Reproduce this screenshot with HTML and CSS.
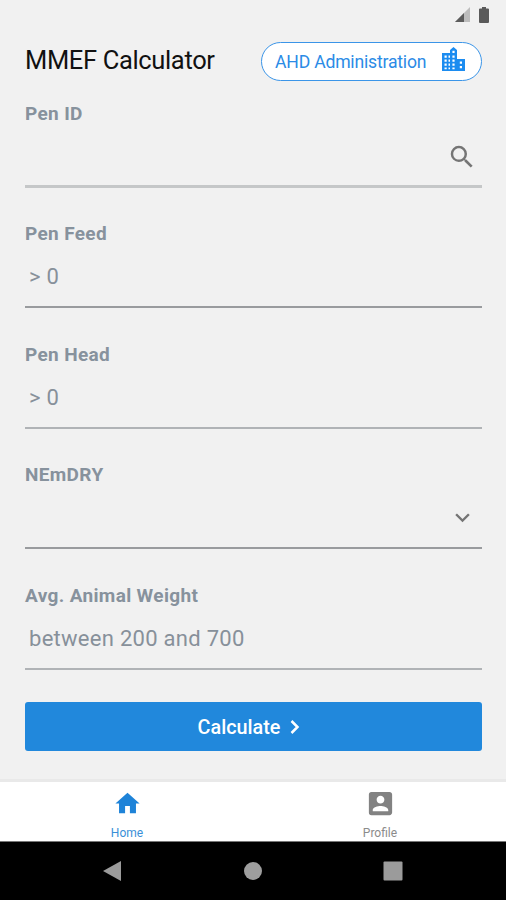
FILE: index.html
```html
<!DOCTYPE html>
<html lang="en">
<head>
    <meta charset="UTF-8">
    <meta name="viewport" content="width=device-width, initial-scale=1.0">
    <title>MMEF Calculator</title>
    <link rel="stylesheet" href="styles.css">
</head>
<body>
    <div class="status-bar">
        <svg class="signal" width="16" height="16" viewBox="0 0 16 16">
            <path d="M15 0v15H0z" fill="#bdbdbd"/>
            <path d="M9 6v9H0z" fill="#5c5c5c"/>
        </svg>
        <svg class="battery" width="10" height="16" viewBox="0 0 10 16">
            <path d="M3 0h4v1.5h2q1 0 1 1V15q0 1-1 1H1q-1 0-1-1V2.5q0-1 1-1h2z" fill="#5a5a5a"/>
        </svg>
    </div>

    <div class="header">
        <h1>MMEF Calculator</h1>
        <a class="admin-button" href="#">
            <span>AHD Administration</span>
            <svg width="23" height="24" viewBox="0 0 23 24">
                <path fill="#1c8cf0" fill-rule="evenodd" d="M0 6h8V3l3.500-3L15 3v9h8v12H0z
                    M2.500 8.500v2.200h2.200V8.500z M2.500 12.500v2.200h2.200v-2.200z M2.500 16.500v2.200h2.200v-2.200z M2.500 20.500v1.800h2.200v-1.800z
                    M6.500 8.500v2.200h1.500V8.500z M6.500 12.500v2.200h1.500v-2.200z M6.500 16.500v2.200h1.500v-2.200z M6.500 20.500v1.800h1.500v-1.800z
                    M10.400 3.800v2.200h2.200V3.800z M10.400 8.500v2.200h2.200V8.500z M10.400 12.500v2.200h2.200v-2.200z M10.400 16.500v2.200h2.200v-2.200z M10.400 20.500v1.800h2.200v-1.800z
                    M17.800 14.500v2.200H20v-2.200z M17.800 19v2.200H20V19z"/>
            </svg>
        </a>
    </div>

    <div class="form">
        <div class="field">
            <label for="pen-id">Pen ID</label>
            <div class="control light">
                <input id="pen-id" type="text">
                <svg width="30" height="30" viewBox="0 0 24 24">
                    <path fill="#757575" d="M15.500 14h-.79l-.28-.27A6.471 6.471 0 0 0 16 9.500 6.500 6.500 0 1 0 9.500 16c1.610 0 3.090-.59 4.230-1.570l.27.28v.79l5 4.990L20.490 19l-4.990-5zm-6 0C7.010 14 5 11.990 5 9.500S7.010 5 9.500 5 14 7.010 14 9.500 11.990 14 9.500 14z"/>
                </svg>
            </div>
        </div>
        <div class="field">
            <label for="pen-feed">Pen Feed</label>
            <div class="control">
                <input id="pen-feed" type="text" placeholder="&gt; 0">
            </div>
        </div>
        <div class="field">
            <label for="pen-head">Pen Head</label>
            <div class="control medium">
                <input id="pen-head" type="text" placeholder="&gt; 0">
            </div>
        </div>
        <div class="field">
            <label for="nem-dry">NEmDRY</label>
            <div class="control">
                <input id="nem-dry" type="text">
                <svg width="29" height="29" viewBox="0 0 24 24">
                    <path fill="#757575" d="M7.410 8.590 12 13.170l4.590-4.580L18 10l-6 6-6-6z"/>
                </svg>
            </div>
        </div>
        <div class="field">
            <label for="weight">Avg. Animal Weight</label>
            <div class="control medium">
                <input id="weight" type="text" placeholder="between 200 and 700">
            </div>
        </div>
        <button class="calculate" type="button">
            <span>Calculate</span>
            <svg width="10" height="16" viewBox="0 0 10 16">
                <path d="M1.500 2l6 6-6 6" fill="none" stroke="#fff" stroke-width="2.500"/>
            </svg>
        </button>
    </div>

    <div class="tabs">
        <a class="tab active" href="#">
            <svg width="29" height="29" viewBox="0 0 24 24">
                <path fill="#1e83d8" d="M10 20v-6h4v6h5v-8h3L12 3 2 12h3v8z"/>
            </svg>
            <span>Home</span>
        </a>
        <a class="tab" href="#">
            <svg width="31" height="31" viewBox="0 0 24 24">
                <path fill="#828282" d="M3 5v14a2 2 0 0 0 2 2h14c1.100 0 2-.9 2-2V5c0-1.100-.9-2-2-2H5a2 2 0 0 0-2 2zm12 4c0 1.660-1.340 3-3 3s-3-1.340-3-3 1.340-3 3-3 3 1.340 3 3zm-9 8c0-2 4-3.100 6-3.100s6 1.100 6 3.100v1H6v-1z"/>
            </svg>
            <span>Profile</span>
        </a>
    </div>

    <div class="system-nav">
        <svg width="20" height="22" viewBox="0 0 20 22">
            <path d="M18 1v20L0 11z" fill="#9b9b9b"/>
        </svg>
        <svg width="20" height="20" viewBox="0 0 20 20">
            <circle cx="10" cy="10" r="9" fill="#9e9e9e"/>
        </svg>
        <svg width="20" height="20" viewBox="0 0 20 20">
            <rect x=".5" y=".5" width="19" height="19" rx="1" fill="#9b9b9b"/>
        </svg>
    </div>
</body>
</html>
```

FILE: styles.css
```css
* {
    box-sizing: border-box;
}
body {
    margin: 0;
    height: 900px;
    display: flex;
    flex-direction: column;
    font-family: Roboto, "Liberation Sans", sans-serif;
    background-color: #f1f1f1;
    overflow: hidden;
}
svg {
    display: block;
    flex-shrink: 0;
}
a {
    text-decoration: none;
}
.status-bar {
    height: 42px;
    padding: 7px 17px 0 0;
    display: flex;
    justify-content: flex-end;
    gap: 8px;
}
.header {
    height: 59px;
    padding: 0 24px 0 25px;
    display: flex;
    justify-content: space-between;
    align-items: flex-start;
}
.header h1 {
    margin: 0;
    font-size: 25.5px;
    font-weight: 400;
    letter-spacing: -0.35px;
    line-height: 36px;
    color: #111;
    white-space: nowrap;
}
.admin-button {
    width: 221px;
    height: 39px;
    padding: 1px 16px 0 13px;
    display: flex;
    justify-content: space-between;
    align-items: center;
    border: 1px solid #3b95e8;
    border-radius: 20px;
    background-color: #fff;
    color: #2b8be6;
    font-size: 17.6px;
    letter-spacing: -0.2px;
    white-space: nowrap;
}
.admin-button svg {
    margin-bottom: 6px;
}
.form {
    height: 678px;
    padding: 0 24px 0 25px;
}
.field {
    height: 120.4px;
}
.field label {
    display: block;
    line-height: 26px;
    font-size: 19px;
    font-weight: 700;
    letter-spacing: 0.35px;
    color: #87929d;
}
.control {
    height: 61px;
    display: flex;
    align-items: center;
    padding: 0 5px 0 4px;
    border-bottom: 2px solid #999b9e;
}
.control.light {
    padding-top: 1px;
    border-bottom: 3px solid #c5c7c8;
}
.control.medium {
    border-bottom-color: #b0b3b6;
}
.control input {
    flex: 1;
    min-width: 0;
    padding: 0;
    border: none;
    outline: none;
    background: none;
    font-family: inherit;
    font-size: 22px;
    letter-spacing: 0.28px;
    color: #333;
}
.control input::placeholder {
    color: #87909a;
    opacity: 1;
}
.calculate {
    width: 100%;
    height: 49px;
    margin-top: -1px;
    padding: 2px 9px 0 0;
    display: flex;
    justify-content: center;
    align-items: center;
    gap: 10px;
    border: none;
    border-radius: 3px;
    background-color: #2188dc;
    color: #fff;
    font-family: inherit;
    font-size: 19.8px;
    font-weight: 500;
}
.tabs {
    height: 62px;
    display: flex;
    border-top: 3px solid #e9e9e9;
    background-color: #fff;
}
.tab {
    flex: 1;
    display: flex;
    flex-direction: column;
    align-items: center;
    padding-left: 1px;
    font-size: 12px;
    color: #8b8b8b;
}
.tab svg {
    height: 31px;
    margin-top: 6px;
}
.tab span {
    margin-top: 7px;
    line-height: 14px;
}
.tab.active {
    color: #3a8fd8;
}
.system-nav {
    flex: 1;
    display: flex;
    justify-content: center;
    align-items: center;
    gap: 120px;
    border-top: 1px solid #777;
    background-color: #000;
}
```
